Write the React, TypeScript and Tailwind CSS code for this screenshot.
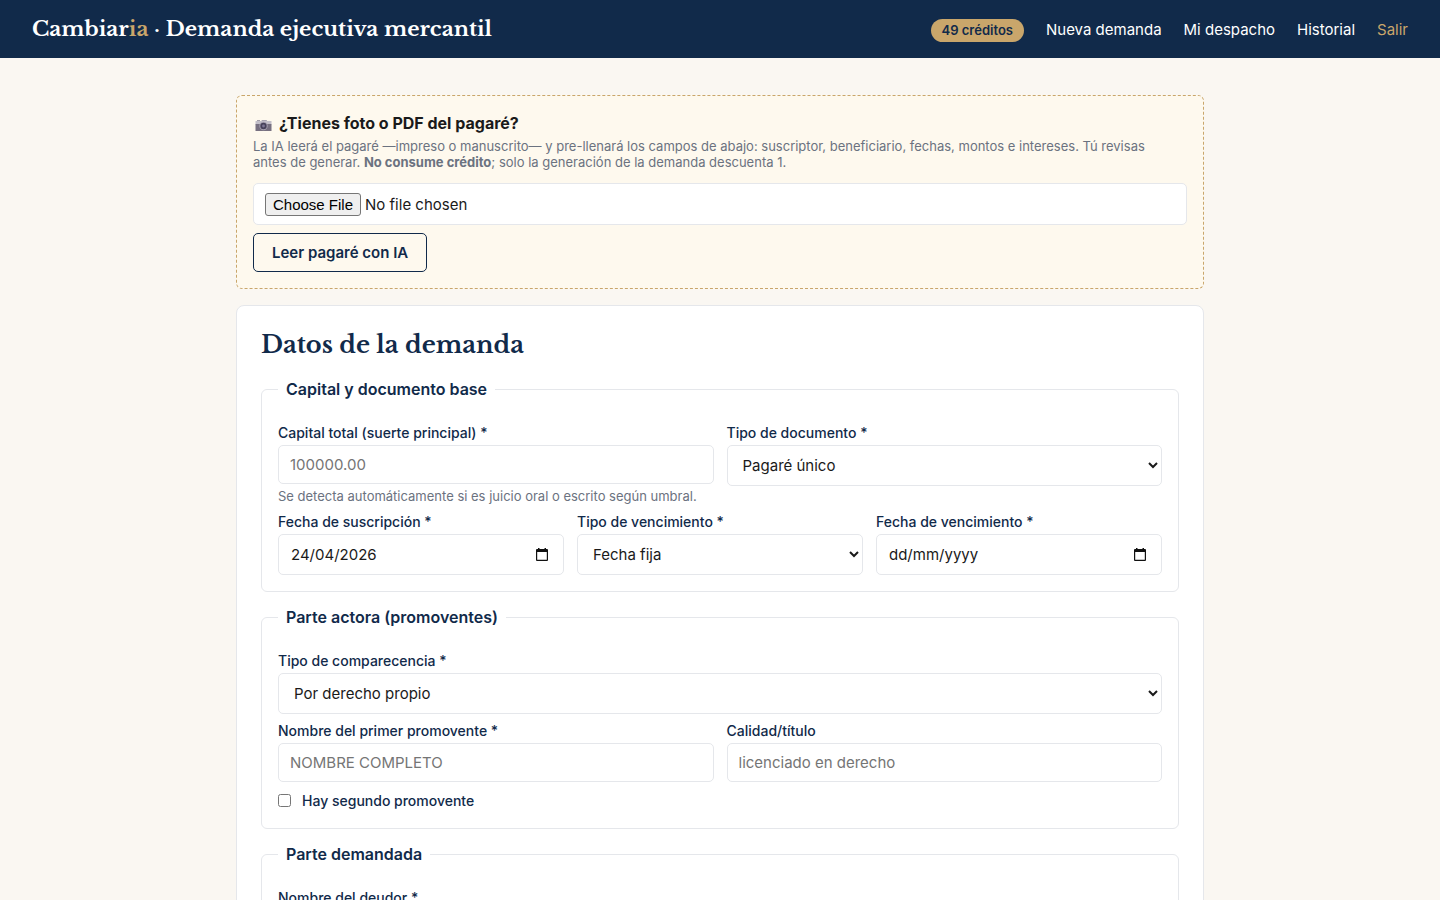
import React from 'react'
import clsx from 'clsx'

const control = 'block w-full rounded-[5px] border border-[#e5e7eb] bg-white px-[11px] text-[15px] text-[#1a1a1a]'

function CameraIcon() {
  return (
    <svg className="mt-1 mr-[7px] ml-0.5 h-[13px] w-[17px]" viewBox="0 0 17 13" aria-hidden="true">
      <rect x="2" y="1.2" width="3" height="1.5" fill="#8d8896"/>
      <path d="M6 2.5 7 1h4.5l1 1.5z" fill="#a9a5b2"/>
      <rect x="0.5" y="2" width="16" height="3.5" fill="#c3c0c9"/>
      <rect x="0.5" y="5" width="16" height="7" fill="#777080"/>
      <circle cx="8.5" cy="7" r="4.2" fill="#a8a2b2"/>
      <circle cx="8.5" cy="7" r="3.2" fill="#47425a"/>
      <circle cx="8.5" cy="7" r="1.4" fill="#7d7694"/>
    </svg>
  )
}

function CalendarIcon() {
  return (
    <svg className="size-[14px]" viewBox="0 0 14 14" aria-hidden="true">
      <path d="M3 0h1.5v1h5V0H11v1h1q1 0 1 1v10q0 1-1 1H2q-1 0-1-1V2q0-1 1-1h1zM2.2 4v7.8h9.6V4z" fill="#111"/>
    </svg>
  )
}

function Field({ id, label, help, children }: { id: string; label: string; help?: string; children: React.ReactNode }) {
  return (
    <div className="min-w-0">
      <label htmlFor={ id } className="mb-0.5 block text-[14px] leading-5 font-medium text-[#112a4a]">{ label }</label>
      { children }
      { help && <p className="mt-1 text-[13px] leading-[17px] text-[#6b7280]">{ help }</p> }
    </div>
  )
}

function TextInput({ id, placeholder }: { id: string; placeholder?: string }) {
  return <input id={ id } type="text" placeholder={ placeholder } className={ clsx(control, 'h-[39px] placeholder:text-[#757575]') }/>
}

function DateInput({ id, value }: { id: string; value?: string }) {
  return (
    <div className="flex h-[41px] items-center rounded-[5px] border border-[#e5e7eb] bg-white pr-3.5 pl-3">
      <input
        id={ id } type="text" inputMode="numeric" defaultValue={ value } placeholder="dd/mm/yyyy"
        className="min-w-0 flex-1 pt-0.5 text-[15px] text-[#1a1a1a] placeholder:text-[#1a1a1a]"/>
      <button type="button" aria-label="Abrir calendario"><CalendarIcon/></button>
    </div>
  )
}

function Select({ id, options }: { id: string; options: string[] }) {
  return (
    <select id={ id } className={ clsx(control, 'h-[41px]') }>
      { options.map((option) => <option key={ option }>{ option }</option>) }
    </select>
  )
}

function Section({ title, children }: { title: string; children: React.ReactNode }) {
  return (
    <fieldset className="mb-[13px] min-w-0 rounded-md border border-[#e5e7eb] px-4 pb-4">
      <legend className="px-2 text-base leading-6 font-semibold text-[#112a4a]">{ title }</legend>
      <div className="flex flex-col gap-[7px] pt-[22px]">{ children }</div>
    </fieldset>
  )
}

export default function App() {
  return (
    <div className="min-h-screen bg-[#faf7f2] font-[Inter,sans-serif] text-[#1a1a1a]">
      <header className="flex h-[58px] items-center justify-between bg-[#112a4a] px-8 text-white">
        <div className="font-['Libre_Baskerville','Liberation_Serif',serif] text-[21px] leading-8 font-bold">
          Cambiar<span className="text-[#c9a66b]">ia</span> · Demanda ejecutiva mercantil
        </div>
        <nav className="flex items-center gap-[22px] pt-0.5 text-[15px]">
          <span className="rounded-full bg-[#c9a66b] px-[11px] text-[13px] leading-[23px] font-semibold text-[#112a4a]">49 créditos</span>
          <a href="#nueva">Nueva demanda</a>
          <a href="#despacho">Mi despacho</a>
          <a href="#historial">Historial</a>
          <a href="#salir" className="text-[#c9a66b]">Salir</a>
        </nav>
      </header>

      <main className="mx-auto max-w-[1000px] px-4 pt-[37px] pb-8">
        <section className="mb-4 rounded-md border border-dashed border-[#c9a66b] bg-[#fef9ee] p-4">
          <label htmlFor="archivo" className="flex items-center text-base leading-[22px] font-bold"><CameraIcon/>¿Tienes foto o PDF del pagaré?</label>
          <p className="mt-1 pr-2 text-[13px] leading-4 text-[#6b7280]">
            La IA leerá el pagaré —impreso o manuscrito— y pre-llenará los campos de abajo: suscriptor, beneficiario, fechas, montos e intereses. Tú
            revisas antes de generar. <strong>No consume crédito</strong>; solo la generación de la demanda descuenta 1.
          </p>
          <input
            id="archivo" type="file"
            className={ clsx(control, 'mt-[13px] h-[42px] py-[9px] file:me-1 file:rounded-[3px] file:border file:border-[#767676] file:bg-[#efefef] file:px-[7px] file:font-["Liberation_Sans",sans-serif] file:text-[15px] file:leading-[21px] file:text-black') }/>
          <button type="button" className="mt-2 block h-[39px] rounded-[5px] border border-[#112a4a] px-[18px] pt-0.5 text-[15px] font-semibold text-[#112a4a]">
            Leer pagaré con IA
          </button>
        </section>

        <form className="rounded-lg border border-[#e5e7eb] bg-white px-6 pt-[21px] pb-6">
          <h2 className="mb-3.5 font-['Libre_Baskerville','Liberation_Serif',serif] text-2xl leading-9 font-bold text-[#112a4a]">Datos de la demanda</h2>

          <Section title="Capital y documento base">
            <div className="grid grid-cols-2 gap-[13px]">
              <Field id="capital" label="Capital total (suerte principal) *" help="Se detecta automáticamente si es juicio oral o escrito según umbral.">
                <TextInput id="capital" placeholder="100000.00"/>
              </Field>
              <Field id="documento" label="Tipo de documento *">
                <Select id="documento" options={ ['Pagaré único', 'Varios pagarés'] }/>
              </Field>
            </div>
            <div className="grid grid-cols-3 gap-[13px]">
              <Field id="suscripcion" label="Fecha de suscripción *">
                <DateInput id="suscripcion" value="24/04/2026"/>
              </Field>
              <Field id="tipo-vencimiento" label="Tipo de vencimiento *">
                <Select id="tipo-vencimiento" options={ ['Fecha fija', 'A la vista'] }/>
              </Field>
              <Field id="vencimiento" label="Fecha de vencimiento *">
                <DateInput id="vencimiento"/>
              </Field>
            </div>
          </Section>

          <Section title="Parte actora (promoventes)">
            <Field id="comparecencia" label="Tipo de comparecencia *">
              <Select id="comparecencia" options={ ['Por derecho propio', 'Endosatario en procuración'] }/>
            </Field>
            <div className="grid grid-cols-2 gap-[13px]">
              <Field id="promovente" label="Nombre del primer promovente *">
                <TextInput id="promovente" placeholder="NOMBRE COMPLETO"/>
              </Field>
              <Field id="calidad" label="Calidad/título">
                <TextInput id="calidad" placeholder="licenciado en derecho"/>
              </Field>
            </div>
            <label className="flex items-center gap-[11px] text-[14px] leading-[23px] font-medium text-[#112a4a]">
              <input type="checkbox" className="size-[13px]"/>
              Hay segundo promovente
            </label>
          </Section>

          <Section title="Parte demandada">
            <Field id="deudor" label="Nombre del deudor *">
              <TextInput id="deudor" placeholder="NOMBRE COMPLETO"/>
            </Field>
          </Section>
        </form>
      </main>
    </div>
  )
}
